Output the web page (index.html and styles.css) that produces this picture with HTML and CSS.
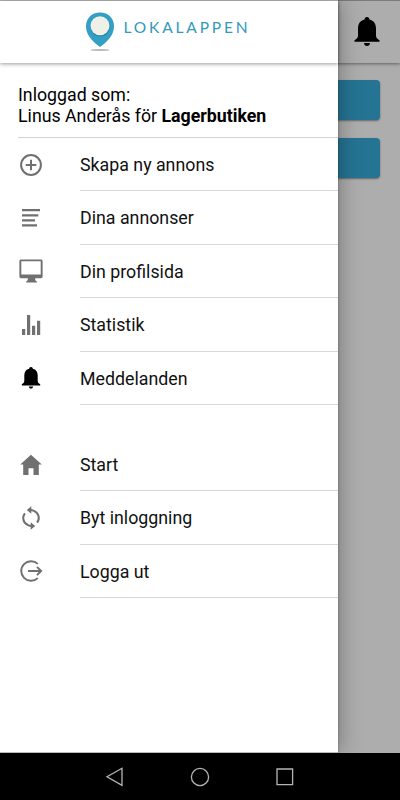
FILE: index.html
```html
<!DOCTYPE html>
<html lang="sv">
<head>
<meta charset="utf-8">
<title>Lokalappen</title>
<link rel="stylesheet" href="styles.css">
</head>
<body>
<div class="screen">
  <div class="app">
    <div class="page">
      <header class="page-header">
        <svg class="page-bell" viewBox="0 0 26 30"><path d="M13 0c1.600 0 2.400 1.100 2.400 2.400 4.300 1 6.600 4.300 6.600 8.800v7.500c0 2 1.200 3.200 3.500 4.600v1.500H.5v-1.500C2.800 21.900 4 20.700 4 18.700v-7.500c0-4.500 2.300-7.800 6.600-8.800C10.600 1.100 11.400 0 13 0zM10 26h6c-.2 1.900-1.300 2.900-3 2.900s-2.800-1-3-2.900z"/></svg>
      </header>
      <div class="page-buttons">
        <div class="page-button"></div>
        <div class="page-button"></div>
      </div>
    </div>
    <aside class="drawer">
      <header class="brand">
        <svg class="pin" viewBox="0 0 30 40">
          <ellipse cx="15" cy="38" rx="9.500" ry="1" fill="#bbb"/>
          <path d="M15 .5C6.500 .5 1 6.500 1 14.200c0 8.200 5.800 15 14 20.800 8.200-5.800 14-12.600 14-20.800C29 6.500 23.500.5 15 .5z" fill="#349fc4"/>
          <circle cx="15.200" cy="14.800" r="9.700" fill="#2784a5"/>
          <circle cx="15" cy="13.700" r="9.500" fill="#eff0e8"/>
        </svg>
        <span class="brand-name">LOKALAPPEN</span>
      </header>
      <div class="account">
        <div>Inloggad som:</div>
        <div>Linus Anderås för <b>Lagerbutiken</b></div>
      </div>
      <nav class="menu">
        <a class="item"><svg class="icon line" viewBox="0 0 26 26"><circle cx="13" cy="13" r="9.900"/><path d="M13 7.700v10.600M7.700 13h10.600"/></svg><span class="label">Skapa ny annons</span></a>
        <a class="item"><svg class="icon" viewBox="0 0 26 26"><path d="M4 4h18v2.300H4zM4 9.200h16.300v2.300H4zM4 14.200h13v2.300H4zM4 19.300h15v2.300H4z"/></svg><span class="label">Dina annonser</span></a>
        <a class="item"><svg class="icon" viewBox="0 0 26 26"><path fill-rule="evenodd" d="M3 1.500h20c.9 0 1.600.7 1.600 1.600v15.500c0 .9-.7 1.600-1.600 1.600h-6l.5 2.300 1.500 1.200v.9H8v-.9l1.500-1.200.5-2.300H3c-.9 0-1.600-.7-1.600-1.600V3.100c0-.9.7-1.600 1.600-1.600zM3.300 3.300v13.200h19.400V3.300z"/></svg><span class="label">Din profilsida</span></a>
        <a class="item"><svg class="icon" viewBox="0 0 26 26"><path d="M4 17h3.200v6H4zM9 3h3.200v20H9zM14 13.700h3.200V23H14zM19 8.700h3.200V23H19z"/></svg><span class="label">Statistik</span></a>
        <a class="item"><svg class="icon black" viewBox="0 0 26 26"><path d="M13 2c1.200 0 1.800.8 1.800 1.800 3.200.7 4.900 3.100 4.900 6.500v5.500c0 1.500.8 2.400 2.500 3.500v1.100H3.800v-1.100c1.700-1.100 2.500-2 2.500-3.500v-5.500c0-3.400 1.700-5.800 4.900-6.500C11.200 2.800 11.800 2 13 2zM10.800 21.500h4.400c-.2 1.300-1 2.100-2.200 2.100s-2-.8-2.200-2.100z"/></svg><span class="label">Meddelanden</span></a>
        <a class="item spaced"><svg class="icon" viewBox="0 0 26 26"><path d="M13 2.700l10.800 9.900h-3V23h-5.300v-6.700h-5V23H5.200V12.600h-3z"/></svg><span class="label">Start</span></a>
        <a class="item"><svg class="icon line" viewBox="0 0 26 26"><path d="M6.900 8.300A7.700 7.700 0 0 0 10 20.200c1.200.6 2.300.8 4 .8M19.100 17.700A7.700 7.700 0 0 0 16 5.800c-1.200-.6-2.300-.8-4-.8"/><path class="tip" d="M13.300 1.200v7.600L8.800 5zM12.700 17.200v7.600l4.500-3.800z"/></svg><span class="label">Byt inloggning</span></a>
        <a class="item"><svg class="icon line" viewBox="0 0 26 26"><path d="M19.800 5.900a9.800 9.800 0 1 0 0 14.200M10 13h13M19 8.900l4.100 4.100-4.100 4.100"/></svg><span class="label">Logga ut</span></a>
      </nav>
    </aside>
  </div>
  <footer class="navbar">
    <svg viewBox="0 0 20 20"><path d="M17 1.300v17L2 9.800z"/></svg>
    <svg viewBox="0 0 20 20"><circle cx="10" cy="10" r="8.600"/></svg>
    <svg viewBox="0 0 20 20"><path d="M2 2h15.600v15.600H2z"/></svg>
  </footer>
</div>
</body>
</html>
```
FILE: styles.css
```css
* { box-sizing: border-box; }
body { margin: 0; font-family: Roboto, sans-serif; color: #111; }
.screen { width: 400px; height: 800px; display: flex; flex-direction: column; background: #000; overflow: hidden; }
.app { position: relative; height: 753px; overflow: hidden; }
.page { height: 100%; background: #adadad; border-top: 1px solid #858585; }
.page-header { height: 62px; display: flex; justify-content: flex-end; align-items: center; padding-right: 20px; box-shadow: 0 1px 3px rgba(0,0,0,.45); }
.page-bell { width: 26px; height: 30px; }
.page-buttons { display: flex; flex-direction: column; gap: 18px; padding: 17px 20px 0; }
.page-button { height: 40px; border-radius: 4px; background: #257493; box-shadow: 0 1px 2px rgba(0,0,0,.4); }
.drawer { position: absolute; inset: 0 auto 0 0; width: 338px; background: #fff; border-top: 1px solid #b5b1b3; border-bottom: 1px solid #bbb; box-shadow: 0 0 22px rgba(0,0,0,.35), 0 0 2px rgba(0,0,0,.3); }
.brand { height: 62px; display: flex; align-items: flex-start; padding: 11px 0 0 84.500px; box-shadow: 0 1px 4px rgba(0,0,0,.4); }
.pin { width: 30px; height: 40px; }
.brand-name { margin: 5px 0 0 9px; font: 400 15.500px/20px Lato, sans-serif; letter-spacing: 2.850px; color: #3299bd; }
.account { margin-left: 18px; height: 75px; padding-top: 22px; border-bottom: 1px solid #d2d2d2; font-size: 17.750px; line-height: 21px; color: #000; }
.item { display: flex; align-items: center; height: 53.400px; padding-left: 18px; }
.icon { width: 26px; height: 26px; flex: none; fill: #707070; }
.icon.black { fill: #000; }
.icon.line { fill: none; stroke: #707070; stroke-width: 2; }
.icon .tip { fill: #707070; stroke: none; }
.label { flex: 1; height: 100%; margin-left: 36px; padding-top: 1px; line-height: 52px; font-size: 17.800px; border-bottom: 1px solid #d8d8d8; }
.spaced { margin-top: 33px; }
.navbar { height: 47px; display: flex; justify-content: center; align-items: center; gap: 65px; background: #000; }
.navbar svg { width: 20px; height: 20px; fill: none; stroke: #b5b5b5; stroke-width: 1.300; }
```
